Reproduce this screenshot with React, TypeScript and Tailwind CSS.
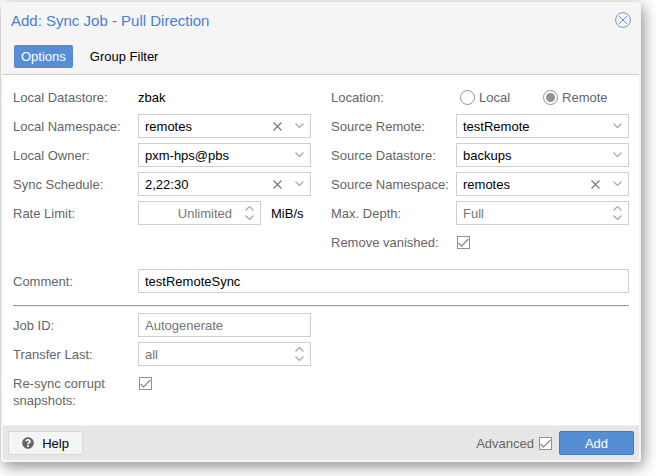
import { useState, type ReactNode } from "react";

function Chevron({ up = false }: { up?: boolean }) {
  return (
    <svg width="9" height="5" viewBox="0 0 9 5" fill="none" stroke="#ababab" strokeWidth="1.3" aria-hidden="true">
      <path d={up ? "M.5 4.500l4-4 4 4" : "M.5 .5l4 4 4-4"} />
    </svg>
  );
}

function Row({ label, htmlFor, children }: { label: string; htmlFor?: string; children: ReactNode }) {
  return (
    <div className="flex min-h-6">
      <label htmlFor={htmlFor} className="w-[125px] shrink-0 pt-1 pr-3 leading-[17px] whitespace-nowrap">
        {label}
      </label>
      {children}
    </div>
  );
}

const box = "flex h-6 min-w-0 flex-1 border border-[#cfcfcf] bg-white text-black";
const field = "min-w-0 flex-1 appearance-none bg-transparent pl-1.5 outline-none placeholder:text-[#757575]";

function Combo({ id, label, value, clearable }: { id: string; label: string; value: string; clearable?: boolean }) {
  const [current, setCurrent] = useState(value);
  return (
    <Row label={label} htmlFor={id}>
      <div className={box}>
        <select id={id} value={current} onChange={(e) => setCurrent(e.target.value)} className={field}>
          <option value=""></option>
          <option value={value}>{value}</option>
        </select>
        {clearable && (
          <button type="button" aria-label={"Clear " + label} onClick={() => setCurrent("")} className="grid w-[22px] place-items-center">
            <svg width="9" height="9" viewBox="0 0 9 9" stroke="#757575" strokeWidth="1.1" aria-hidden="true">
              <path d="M.5 .5l8 8M8.5 .5l-8 8" />
            </svg>
          </button>
        )}
        <span className="pointer-events-none grid w-[22px] place-items-center pb-0.5">
          <Chevron />
        </span>
      </div>
    </Row>
  );
}

function Spinner({ id, label, placeholder, unit }: { id: string; label: string; placeholder: string; unit?: string }) {
  return (
    <Row label={label} htmlFor={id}>
      <div className={box}>
        <input id={id} type="text" inputMode="numeric" placeholder={placeholder} className={unit ? field + " pr-1.5 text-right" : field} />
        <div className="flex w-[22px] flex-col py-0.5">
          <button type="button" aria-label={"Increase " + label} className="grid flex-1 place-items-center">
            <Chevron up />
          </button>
          <button type="button" aria-label={"Decrease " + label} className="grid flex-1 place-items-center">
            <Chevron />
          </button>
        </div>
      </div>
      {unit && <span className="w-[50px] pt-1 pl-2.5 leading-[17px] text-black">{unit}</span>}
    </Row>
  );
}

function Tick({ id }: { id: string }) {
  return (
    <span className="grid size-[13px] shrink-0">
      <input id={id} type="checkbox" defaultChecked className="peer col-start-1 row-start-1 size-[13px] appearance-none border border-[#919191] bg-white" />
      <svg viewBox="0 0 13 13" fill="none" stroke="#919191" strokeWidth="1.4" className="pointer-events-none invisible col-start-1 row-start-1 size-[13px] peer-checked:visible" aria-hidden="true">
        <path d="M1.500 7l3 3L11.500 3" />
      </svg>
    </span>
  );
}

function Radio({ label, checked }: { label: string; checked?: boolean }) {
  return (
    <label className="flex items-center gap-1">
      <input
        type="radio"
        name="location"
        defaultChecked={checked}
        className="grid size-[15px] appearance-none place-items-center rounded-full border border-[#919191] bg-white checked:after:size-[9px] checked:after:rounded-full checked:after:bg-[#919191]"
      />
      {label}
    </label>
  );
}

export default function App() {
  return (
    <div className="min-h-screen bg-white pt-0.5 pr-[15px] pb-3.5 pl-px font-['Liberation_Sans',Arial,sans-serif] text-[13px] leading-[17px] text-[#666]">
      <form
        role="dialog"
        aria-labelledby="title"
        onSubmit={(e) => e.preventDefault()}
        className="overflow-hidden rounded-[4px] border-2 border-[#f5f5f5] shadow-[2px_4px_15px_#888]"
      >
        <header className="border-b border-[#cfcfcf] bg-[#f5f5f5] pb-1.5">
          <div className="flex h-8 items-center justify-between px-2">
            <h1 id="title" className="text-[15px] text-[#4a80cf]">Add: Sync Job - Pull Direction</h1>
            <button type="button" aria-label="Close">
              <svg width="16" height="16" viewBox="0 0 16 16" fill="none" stroke="#6f96d3" aria-hidden="true">
                <circle cx="8" cy="8" r="7.4" />
                <path d="M4 4l8 8M12 4l-8 8" />
              </svg>
            </button>
          </div>
          <nav role="tablist" className="flex gap-2.5 px-[11px] pt-[9px]">
            <button type="button" role="tab" aria-selected="true" className="h-[23px] rounded-[2px] bg-[#568ed6] px-[7px] text-white">Options</button>
            <button type="button" role="tab" aria-selected="false" className="h-[23px] px-[7px] text-black">Group Filter</button>
          </nav>
        </header>

        <main className="bg-white px-2.5 pt-2.5 pb-4">
          <div className="grid grid-cols-2 gap-x-5">
            <div className="flex flex-col gap-[5px]">
              <Row label="Local Datastore:" htmlFor="datastore">
                <output id="datastore" className="pt-1 text-black">zbak</output>
              </Row>
              <Combo id="ns" label="Local Namespace:" value="remotes" clearable />
              <Combo id="owner" label="Local Owner:" value="pxm-hps@pbs" />
              <Combo id="schedule" label="Sync Schedule:" value="2,22:30" clearable />
              <Spinner id="rate" label="Rate Limit:" placeholder="Unlimited" unit="MiB/s" />
            </div>
            <div className="flex flex-col gap-[5px]">
              <Row label="Location:">
                <div className="flex gap-[33px] pl-1">
                  <Radio label="Local" />
                  <Radio label="Remote" checked />
                </div>
              </Row>
              <Combo id="remote" label="Source Remote:" value="testRemote" />
              <Combo id="source" label="Source Datastore:" value="backups" />
              <Combo id="sourcens" label="Source Namespace:" value="remotes" clearable />
              <Spinner id="depth" label="Max. Depth:" placeholder="Full" />
              <Row label="Remove vanished:" htmlFor="vanished">
                <span className="pt-1.5 pl-px"><Tick id="vanished" /></span>
              </Row>
            </div>
          </div>

          <div className="pt-[15px] pb-3">
            <Row label="Comment:" htmlFor="comment">
              <div className={box}>
                <input id="comment" type="text" defaultValue="testRemoteSync" className={field} />
              </div>
            </Row>
          </div>
          <hr className="mb-1.5 h-0.5 border-t border-b border-t-[#999] border-b-[#eee]" />

          <div className="grid grid-cols-2 gap-x-5">
            <div className="flex flex-col gap-[5px]">
              <Row label="Job ID:" htmlFor="job">
                <div className={box}>
                  <input id="job" type="text" placeholder="Autogenerate" className={field} />
                </div>
              </Row>
              <Spinner id="last" label="Transfer Last:" placeholder="all" />
              <div className="flex">
                <label htmlFor="resync" className="w-[125px] shrink-0 pt-1 pr-3">Re-sync corrupt snapshots:</label>
                <span className="pt-1.5 pl-px"><Tick id="resync" /></span>
              </div>
            </div>
          </div>
        </main>

        <footer className="flex items-center justify-between border-t border-[#f0f0f0] bg-[#e6e6e6] px-[5px] pt-[5px] pb-[5px]">
          <button type="button" className="flex h-6 w-[75px] items-center justify-center gap-2 rounded-[2px] border border-[#d8d8d8] bg-[#f5f5f5] text-black">
            <svg width="12" height="12" viewBox="0 0 512 512" fill="#666" aria-hidden="true">
              <path d="M504 256c0 137-111 248-248 248S8 393 8 256 119 8 256 8s248 111 248 248zM262.700 90c-54.500 0-89.300 23-116.500 63.800-3.500 5.300-2.400 12.400 2.700 16.300l34.700 26.300c5.200 3.900 12.600 3 16.700-2.100 17.900-22.700 30.100-35.800 57.300-35.800 20.400 0 45.700 13.100 45.700 33 0 15-12.400 22.700-32.500 34C247.100 238.500 216 254.900 216 296v4c0 6.600 5.400 12 12 12h56c6.600 0 12-5.400 12-12v-1.300c0-28.500 83.200-29.600 83.200-106.700 0-58-60.200-102-116.500-102zM256 338c-25.400 0-46 20.600-46 46s20.600 46 46 46 46-20.600 46-46-20.600-46-46-46z" />
            </svg>
            Help
          </button>
          <div className="flex items-center gap-[7px]">
            <label htmlFor="advanced" className="flex items-center gap-[5px]">
              Advanced
              <Tick id="advanced" />
            </label>
            <button type="submit" className="h-6 w-[75px] rounded-[2px] border border-[#3e7bc8] bg-[#568ed6] text-white">Add</button>
          </div>
        </footer>
      </form>
    </div>
  );
}
